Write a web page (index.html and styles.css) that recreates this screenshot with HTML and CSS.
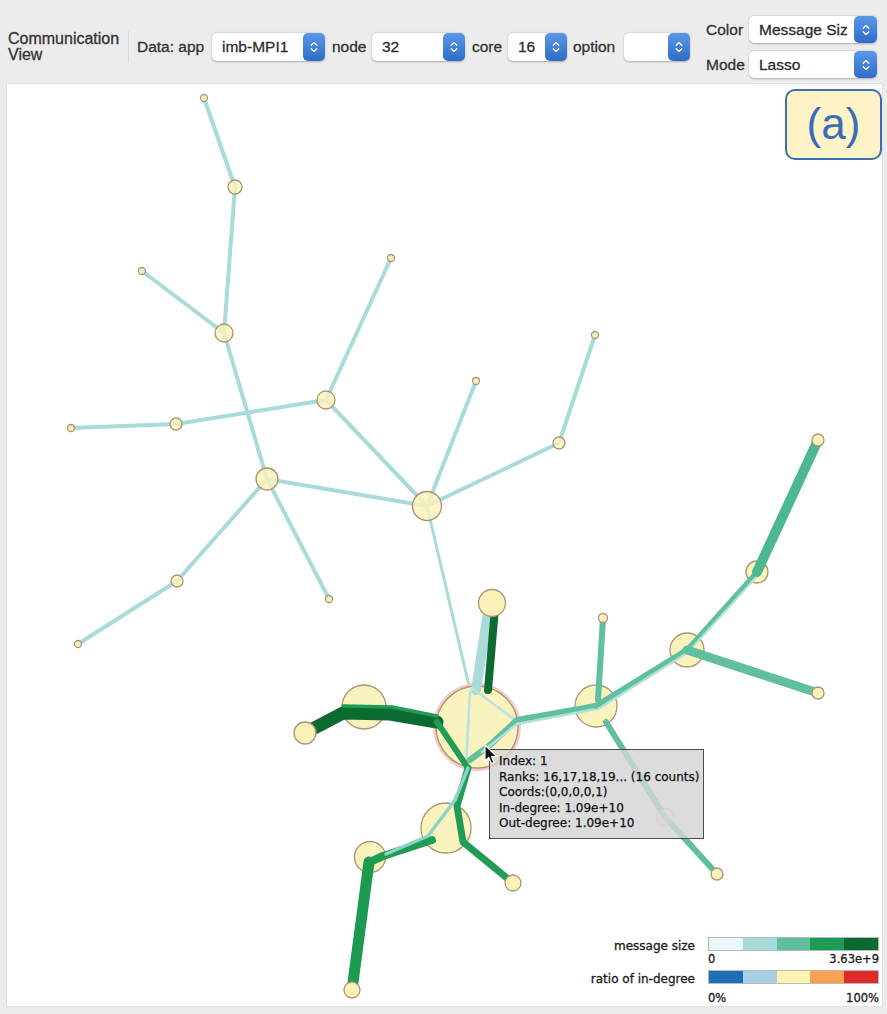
FILE: index.html
```html
<!DOCTYPE html>
<html>
<head>
<meta charset="utf-8">
<title>Communication View</title>
<link rel="stylesheet" href="styles.css">
</head>
<body>
<div class="app">
  <div class="toolbar">
    <div class="title">Communication<br>View</div>
    <div class="sep"></div>
    <span class="lbl l-data">Data: app</span>
    <div class="select s-app"><span class="val">imb-MPI1</span><span class="stepper"><svg width="10" height="16" viewBox="0 0 10 16"><path d="M2.2 6.2 L5 3.6 L7.8 6.2 M2.2 9.8 L5 12.4 L7.8 9.8" stroke="#fff" stroke-width="1.3" fill="none" stroke-linecap="round" stroke-linejoin="round"/></svg></span></div>
    <span class="lbl l-node">node</span>
    <div class="select s-node"><span class="val">32</span><span class="stepper"><svg width="10" height="16" viewBox="0 0 10 16"><path d="M2.2 6.2 L5 3.6 L7.8 6.2 M2.2 9.8 L5 12.4 L7.8 9.8" stroke="#fff" stroke-width="1.3" fill="none" stroke-linecap="round" stroke-linejoin="round"/></svg></span></div>
    <span class="lbl l-core">core</span>
    <div class="select s-core"><span class="val">16</span><span class="stepper"><svg width="10" height="16" viewBox="0 0 10 16"><path d="M2.2 6.2 L5 3.6 L7.8 6.2 M2.2 9.8 L5 12.4 L7.8 9.8" stroke="#fff" stroke-width="1.3" fill="none" stroke-linecap="round" stroke-linejoin="round"/></svg></span></div>
    <span class="lbl l-option">option</span>
    <div class="select s-option"><span class="val"></span><span class="stepper"><svg width="10" height="16" viewBox="0 0 10 16"><path d="M2.2 6.2 L5 3.6 L7.8 6.2 M2.2 9.8 L5 12.4 L7.8 9.8" stroke="#fff" stroke-width="1.3" fill="none" stroke-linecap="round" stroke-linejoin="round"/></svg></span></div>
    <div class="modes">
      <span class="lbl">Color</span>
      <div class="select s-wide"><span class="val">Message Siz</span><span class="stepper"><svg width="10" height="16" viewBox="0 0 10 16"><path d="M2.2 6.2 L5 3.6 L7.8 6.2 M2.2 9.8 L5 12.4 L7.8 9.8" stroke="#fff" stroke-width="1.3" fill="none" stroke-linecap="round" stroke-linejoin="round"/></svg></span></div>
      <span class="lbl">Mode</span>
      <div class="select s-wide"><span class="val">Lasso</span><span class="stepper"><svg width="10" height="16" viewBox="0 0 10 16"><path d="M2.2 6.2 L5 3.6 L7.8 6.2 M2.2 9.8 L5 12.4 L7.8 9.8" stroke="#fff" stroke-width="1.3" fill="none" stroke-linecap="round" stroke-linejoin="round"/></svg></span></div>
    </div>
  </div>

  <div class="canvas">
    <svg class="graph" width="875" height="922" viewBox="7 84 875 922">
      <g class="e-light">
        <path d="M204 98 L235 187 L224 333"/>
        <path d="M142 271 L224 333 L267 479"/>
        <path d="M391 258 L326 400 L427 506"/>
        <path d="M71 428 L176 424 L326 400"/>
        <path d="M267 479 L427 506"/>
        <path d="M78 644 L177 581 L267 479 L329 599"/>
        <path d="M476 381 L427 506 L559 443 L595 335"/>
        <path d="M427 506 L470 690 L465 766" class="thin"/>
      </g>
      <g class="n-up">
        <circle cx="204" cy="98" r="3.5"/>
        <circle cx="235" cy="187" r="7"/>
        <circle cx="142" cy="271" r="3.5"/>
        <circle cx="224" cy="333" r="9"/>
        <circle cx="391" cy="258" r="3.5"/>
        <circle cx="326" cy="400" r="9"/>
        <circle cx="176" cy="424" r="6"/>
        <circle cx="71" cy="428" r="3.5"/>
        <circle cx="267" cy="479" r="11"/>
        <circle cx="427" cy="506" r="14.5"/>
        <circle cx="476" cy="381" r="3.5"/>
        <circle cx="595" cy="335" r="3.5"/>
        <circle cx="559" cy="443" r="6"/>
        <circle cx="177" cy="581" r="6"/>
        <circle cx="329" cy="599" r="3.5"/>
        <circle cx="78" cy="644" r="3.5"/>
      </g>
      <g class="n-big">
        <circle cx="477" cy="727" r="42" class="halo"/>
        <circle cx="477" cy="727" r="41"/>
        <circle cx="364" cy="707" r="22"/>
        <circle cx="596" cy="706" r="21"/>
        <circle cx="687" cy="650" r="17"/>
        <circle cx="757" cy="572" r="11"/>
        <circle cx="446" cy="828" r="25"/>
        <circle cx="370" cy="857" r="15.5"/>
      </g>
      <g class="e-heavy">
        <path d="M489 606 L476 690" stroke="#a8dbd9" stroke-width="10"/>
        <path d="M495 608 L488 690" stroke="#0b6b31" stroke-width="8"/>
        <path d="M472 688 L515 720" stroke="#b8e2df" stroke-width="2.5"/>
        <path d="M470 692 L466 766" stroke="#b8e2df" stroke-width="2.5"/>
        <path d="M305 733 L343 713 L390 714 L437 722" stroke="#0b6b31" stroke-width="13"/>
        <path d="M343 706 L392 707 L437 716" stroke="#1f9d55" stroke-width="3.5"/>
        <path d="M437 722 L468 768" stroke="#1f9d55" stroke-width="6"/>
        <path d="M468 768 L457 806 L463 842 L513 883" stroke="#1f9d55" stroke-width="7"/>
        <path d="M432 840 L383 856 L370 862" stroke="#1f9d55" stroke-width="8"/>
        <path d="M468 768 L455 800 L428 836 L386 854" stroke="#8fd3c4" stroke-width="3.5"/>
        <path d="M369 862 L352 990" stroke="#1c9a50" stroke-width="11"/>
        <path d="M470 760 L490 745 L517 720 L596 706" stroke="#5fbf9e" stroke-width="6"/>
        <path d="M482 752 L517 724 L596 709" stroke="#b4e0dc" stroke-width="2.5"/>
        <path d="M596 706 L687 650" stroke="#5fbf9e" stroke-width="6"/>
        <path d="M598 709 L687 653" stroke="#b4e0dc" stroke-width="2.5"/>
        <path d="M687 650 L757 572" stroke="#5fbf9e" stroke-width="5"/>
        <path d="M690 650 L758 575" stroke="#b4e0dc" stroke-width="2"/>
        <path d="M757 572 L818 440" stroke="#4cb88f" stroke-width="10"/>
        <path d="M687 650 L818 693" stroke="#5fbf9e" stroke-width="9"/>
        <path d="M598 700 L603 618" stroke="#5fbf9e" stroke-width="6"/>
        <path d="M606 722 L665 817 L717 874" stroke="#5fbf9e" stroke-width="6"/>
      </g>
      <g class="n-top">
        <circle cx="492" cy="603" r="13.5"/>
        <circle cx="305" cy="733" r="11"/>
        <circle cx="352" cy="990" r="8"/>
        <circle cx="513" cy="883" r="8"/>
        <circle cx="717" cy="874" r="6"/>
        <circle cx="818" cy="440" r="6"/>
        <circle cx="818" cy="693" r="6"/>
        <circle cx="603" cy="618" r="4.5"/>
        <circle cx="665" cy="817" r="9" class="faint"/>
      </g>
    </svg>

    <div class="tag">(a)</div>

    <div class="tooltip">
      <div>Index: 1</div>
      <div>Ranks: 16,17,18,19... (16 counts)</div>
      <div>Coords:(0,0,0,0,1)</div>
      <div>In-degree: 1.09e+10</div>
      <div>Out-degree: 1.09e+10</div>
    </div>

    <svg class="cursor" width="14" height="22" viewBox="0 0 14 22">
      <path d="M1 1 L1 17 L4.8 13.4 L7.4 19.6 L10 18.5 L7.5 12.5 L12.6 12.5 Z" fill="#111" stroke="#fff" stroke-width="1.2" stroke-linejoin="round"/>
    </svg>

    <div class="legend">
      <span class="lg-label">message size</span>
      <div class="bar bar-msg"><i class="c1"></i><i class="c2"></i><i class="c3"></i><i class="c4"></i><i class="c5"></i></div>
      <span></span>
      <div class="ticks"><span>0</span><span>3.63e+9</span></div>
      <span class="lg-label">ratio of in-degree</span>
      <div class="bar bar-ratio"><i class="r1"></i><i class="r2"></i><i class="r3"></i><i class="r4"></i><i class="r5"></i></div>
      <span></span>
      <div class="ticks ticks-end"><span>0%</span><span>100%</span></div>
    </div>
  </div>
</div>
</body>
</html>
```

FILE: styles.css
```css
html, body {
  margin: 0;
  padding: 0;
  background: #ececec;
}
body {
  width: 887px;
  height: 1014px;
  overflow: hidden;
  font-family: "Liberation Sans", Arial, sans-serif;
}
.toolbar {
  display: flex;
  align-items: center;
  height: 84px;
  box-sizing: border-box;
  padding: 10px 0 0 8px;
  color: #333;
  font-size: 15.5px;
  -webkit-text-stroke: 0.3px #333;
}
.title {
  width: 112px;
  font-size: 16px;
  line-height: 16px;
  white-space: nowrap;
}
.sep {
  width: 1px;
  height: 32px;
  background: #d8d8d8;
  margin: 0 8px;
}
.lbl {
  white-space: nowrap;
}
.l-data { width: 69px; margin-right: 6px; }
.l-node { width: 35px; margin: 0 5px 0 7px; }
.l-core { width: 31px; margin: 0 5px 0 7px; }
.l-option { width: 44px; margin: 0 7px 0 6px; }

.select {
  display: flex;
  height: 28px;
  border-radius: 5px;
  background: #fff;
  box-shadow: 0 0.5px 2px rgba(0, 0, 0, 0.28);
  box-sizing: border-box;
}
.val {
  flex: 1;
  padding-left: 10px;
  line-height: 28px;
  overflow: hidden;
  white-space: nowrap;
  color: #2a2a2a;
}
.stepper {
  width: 22px;
  border-radius: 5px;
  background: linear-gradient(#5a98e8, #2f6cc9);
  display: flex;
  align-items: center;
  justify-content: center;
  -webkit-text-stroke: 0;
}
.s-app { width: 113px; }
.s-node { width: 93px; }
.s-core { width: 59px; }
.s-option { width: 66px; }

.modes {
  display: grid;
  grid-template-columns: 40px 128px;
  column-gap: 3px;
  row-gap: 8px;
  margin-left: 16px;
  align-items: center;
}
.modes .select {
  height: 27px;
}
.modes .val {
  line-height: 27px;
}
.s-wide .stepper {
  width: 23px;
}

.canvas {
  position: relative;
  margin-left: 7px;
  width: 875px;
  height: 922px;
  background: #fff;
  box-shadow: 0 0 0 1px #e2e2e2;
}
.graph {
  position: absolute;
  left: 0;
  top: 0;
}
.e-light path {
  fill: none;
  stroke: #a8dbd9;
  stroke-width: 4;
  stroke-linecap: round;
  stroke-linejoin: round;
}
.e-light path.thin {
  stroke-width: 3;
}
.e-heavy path {
  fill: none;
  stroke-linecap: round;
  stroke-linejoin: round;
}
.n-up circle,
.n-big circle,
.n-top circle {
  fill: #fbf2b9;
  stroke: #ad9473;
  stroke-width: 1.3;
}
.n-up circle {
  fill-opacity: 0.8;
}
.n-big circle {
  fill-opacity: 0.92;
}
.n-big circle.halo {
  fill: none;
  stroke: #f5caca;
  stroke-width: 4;
}
.n-top circle.faint {
  fill-opacity: 0.35;
  stroke-opacity: 0.5;
}

.tag {
  position: absolute;
  left: 778px;
  top: 5px;
  width: 97px;
  height: 71px;
  box-sizing: border-box;
  border: 2px solid #3d6fae;
  border-radius: 10px;
  background: #fdf3c6;
  color: #3b6db6;
  font-size: 44px;
  line-height: 66px;
  text-align: center;
}

.tooltip {
  position: absolute;
  left: 482px;
  top: 665px;
  width: 215px;
  height: 90px;
  box-sizing: border-box;
  padding: 4px 0 0 9px;
  background: rgba(212, 212, 212, 0.82);
  border: 1.5px solid #4a4a4a;
  font-family: "DejaVu Sans", Verdana, sans-serif;
  font-size: 12px;
  line-height: 15.5px;
  color: #111;
  -webkit-text-stroke: 0.25px #111;
  white-space: nowrap;
}
.cursor {
  position: absolute;
  left: 477px;
  top: 660px;
}

.legend {
  position: absolute;
  right: 3px;
  top: 853px;
  display: grid;
  grid-template-columns: auto 171px;
  grid-template-rows: 14px 19px 14px 22px;
  column-gap: 13px;
  font-family: "DejaVu Sans", Verdana, sans-serif;
  font-size: 12px;
  color: #1a1a1a;
  -webkit-text-stroke: 0.3px #1a1a1a;
}
.lg-label {
  text-align: right;
  line-height: 14px;
  position: relative;
  top: 2px;
  white-space: nowrap;
}
.bar {
  display: flex;
  border: 1px solid #b9b9b9;
  box-sizing: border-box;
}
.bar i {
  flex: 1;
}
.c1 { background: #edf6f9; }
.c2 { background: #a8dcda; }
.c3 { background: #5ebf9e; }
.c4 { background: #1d9b52; }
.c5 { background: #0b6a32; }
.r1 { background: #1f6fb6; }
.r2 { background: #a7cfe4; }
.r3 { background: #fdf4b2; }
.r4 { background: #f9a24f; }
.r5 { background: #de2a2a; }
.ticks {
  display: flex;
  justify-content: space-between;
  line-height: 16px;
  font-size: 11.5px;
}
.ticks-end {
  align-items: flex-end;
  align-self: end;
}
```
